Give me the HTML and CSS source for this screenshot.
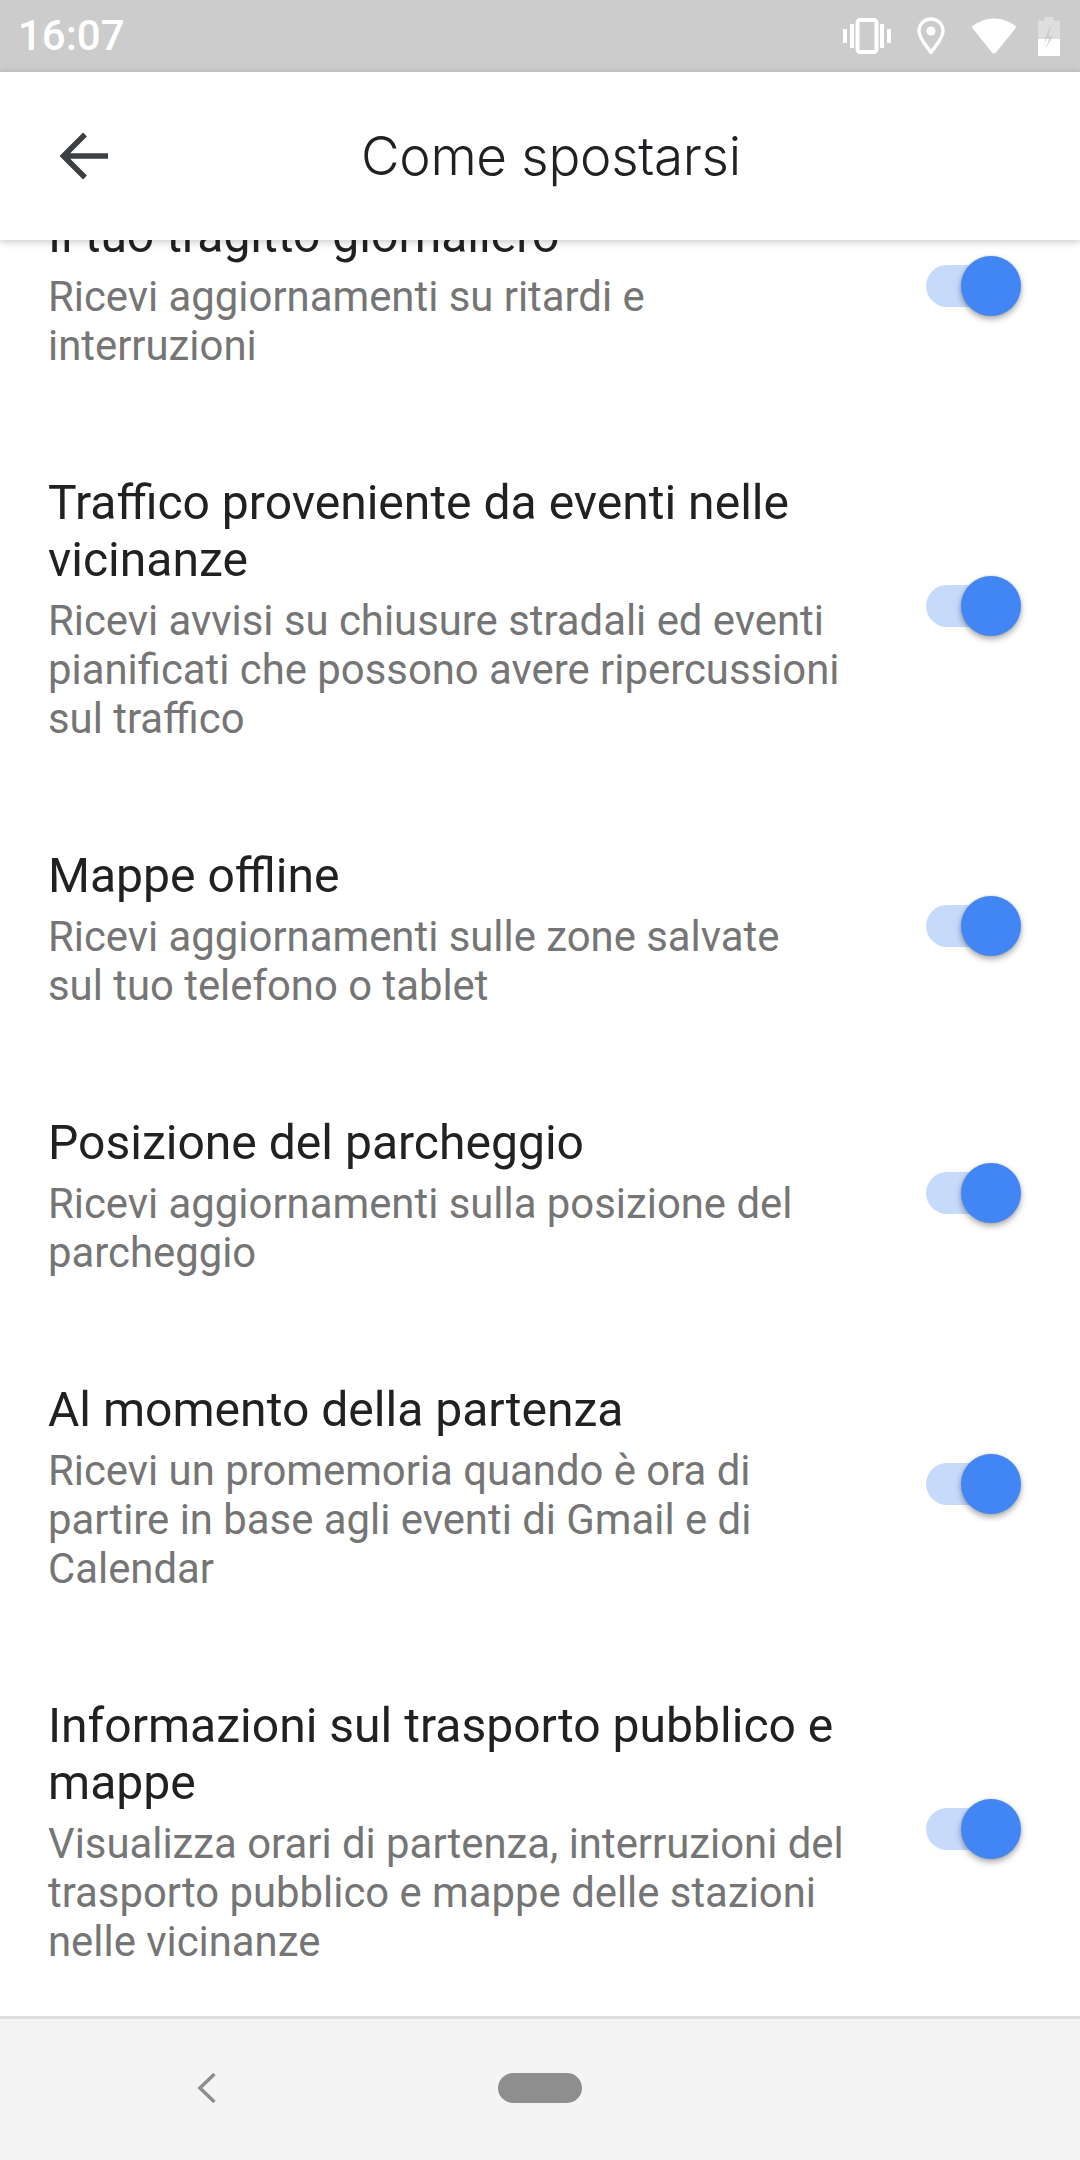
FILE: index.html
```html
<!DOCTYPE html>
<html lang="it">
<head>
<meta charset="utf-8">
<title>Come spostarsi</title>
<link rel="stylesheet" href="styles.css">
</head>
<body>
<div class="app">
  <div class="statusbar">
    <span class="time">16:07</span>
    <div class="status-icons">
      <svg class="ic-vibrate" width="48" height="36" viewBox="0 0 48 36"><rect x="0" y="11" width="4" height="14" fill="#fff"/><rect x="7" y="6" width="4" height="24" fill="#fff"/><rect x="14.500" y="2" width="19" height="32" rx="2.500" fill="none" stroke="#fff" stroke-width="4"/><rect x="37" y="6" width="4" height="24" fill="#fff"/><rect x="44" y="11" width="4" height="14" fill="#fff"/></svg>
      <svg class="ic-pin" width="28" height="38" viewBox="0 0 28 38"><path d="M14 35.500C9 28 2 21.500 2 14 2 7 7.500 2 14 2s12 5 12 12c0 7.500-7 14-12 21.500z" fill="none" stroke="#fff" stroke-width="3.400" stroke-linejoin="round"/><circle cx="14" cy="14" r="4.500" fill="#fff"/></svg>
      <svg class="ic-wifi" width="46" height="36" viewBox="0 0 46 36"><path d="M0.500 9C7 3.500 14.500 0.500 23 0.500S39 3.500 45.500 9L25 34.500c-1 1.300-3 1.300-4 0z" fill="#fff"/></svg>
      <svg class="ic-battery" width="22" height="39" viewBox="0 0 22 39"><path d="M6.500 0h9v3.500H22V39H0V3.500h6.500z" fill="#fff" fill-opacity=".35"/><path d="M0 22h6.800L6 30l2-8h14v17H0z" fill="#fff"/><path d="M12 9l-5 13h4.500L6.500 33 15 19h-4.500L13 9z" fill="#ccc"/></svg>
    </div>
  </div>

  <header class="appbar">
    <svg class="ic-back" width="48" height="48" viewBox="0 0 48 48"><path d="M48 24H4M25 2.500 3.500 24 25 45.500" fill="none" stroke="#3c4043" stroke-width="5.500"/></svg>
    <h1 class="appbar-title">Come spostarsi</h1>
  </header>

  <main class="content">
    <div class="list">
      <div class="row">
        <div class="row-text">
          <div class="row-title">Il tuo tragitto giornaliero</div>
          <div class="row-sub">Ricevi aggiornamenti su ritardi e<br>interruzioni</div>
        </div>
        <div class="switch"><span class="track"></span><span class="knob"></span></div>
      </div>
      <div class="row">
        <div class="row-text">
          <div class="row-title">Traffico proveniente da eventi nelle<br>vicinanze</div>
          <div class="row-sub">Ricevi avvisi su chiusure stradali ed eventi<br>pianificati che possono avere ripercussioni<br>sul traffico</div>
        </div>
        <div class="switch"><span class="track"></span><span class="knob"></span></div>
      </div>
      <div class="row">
        <div class="row-text">
          <div class="row-title">Mappe offline</div>
          <div class="row-sub">Ricevi aggiornamenti sulle zone salvate<br>sul tuo telefono o tablet</div>
        </div>
        <div class="switch"><span class="track"></span><span class="knob"></span></div>
      </div>
      <div class="row">
        <div class="row-text">
          <div class="row-title">Posizione del parcheggio</div>
          <div class="row-sub">Ricevi aggiornamenti sulla posizione del<br>parcheggio</div>
        </div>
        <div class="switch"><span class="track"></span><span class="knob"></span></div>
      </div>
      <div class="row">
        <div class="row-text">
          <div class="row-title">Al momento della partenza</div>
          <div class="row-sub">Ricevi un promemoria quando è ora di<br>partire in base agli eventi di Gmail e di<br>Calendar</div>
        </div>
        <div class="switch"><span class="track"></span><span class="knob"></span></div>
      </div>
      <div class="row">
        <div class="row-text">
          <div class="row-title">Informazioni sul trasporto pubblico e<br>mappe</div>
          <div class="row-sub">Visualizza orari di partenza, interruzioni del<br>trasporto pubblico e mappe delle stazioni<br>nelle vicinanze</div>
        </div>
        <div class="switch"><span class="track"></span><span class="knob"></span></div>
      </div>
    </div>
  </main>

  <nav class="navbar">
    <svg class="ic-navback" width="20" height="30" viewBox="0 0 20 30"><path d="M17.500 1 3 15l14.500 14" fill="none" stroke="#8e8e8e" stroke-width="3.500"/></svg>
    <span class="pill"></span>
  </nav>
</div>
</body>
</html>
```

FILE: styles.css
```css
* { box-sizing: border-box; }
html, body { margin: 0; padding: 0; background: #fff; }
body { font-family: Roboto, "Noto Sans", Arial, sans-serif; }

.app {
  width: 1080px;
  height: 2160px;
  display: flex;
  flex-direction: column;
  overflow: hidden;
}

.statusbar {
  flex: 0 0 72px;
  background: #cccccc;
  display: flex;
  align-items: center;
  justify-content: space-between;
  padding: 0 20px 0 18px;
  color: #fff;
}
.time { font-size: 42px; line-height: 72px; font-weight: 500; }
.status-icons { display: flex; align-items: center; gap: 26px; }
.ic-wifi { margin-right: -5px; }

.appbar {
  flex: 0 0 168px;
  background: #fff;
  display: flex;
  align-items: center;
  padding-left: 60px;
  position: relative;
  z-index: 2;
  box-shadow: 0 2px 8px rgba(0, 0, 0, 0.22);
}
.appbar-title {
  margin: 0 0 0 253px;
  font-family: Inter, Roboto, sans-serif;
  font-size: 53px;
  font-weight: 350;
  letter-spacing: -0.3px;
  color: #202124;
  white-space: nowrap;
}

.content { flex: 1 1 auto; overflow: hidden; background: #fff; min-height: 0; }
.list { margin-top: -85px; }

.row {
  display: flex;
  align-items: center;
  justify-content: space-between;
  padding: 52px 59px 52px 48px;
}
.row-title {
  font-size: 48.05px;
  line-height: 57px;
  color: #212121;
  margin-bottom: 8px;
}
.row-sub {
  font-size: 41.85px;
  line-height: 49px;
  color: #757575;
}

.switch {
  position: relative;
  flex: 0 0 95px;
  width: 95px;
  height: 60px;
  margin-bottom: 6px;
}
.track {
  display: block;
  position: absolute;
  left: 0;
  top: 9px;
  width: 84px;
  height: 42px;
  border-radius: 21px;
  background: #c6dafc;
}
.knob {
  display: block;
  position: absolute;
  right: 0;
  top: 0;
  width: 60px;
  height: 60px;
  border-radius: 50%;
  background: #4285f4;
  box-shadow: 0 3px 6px rgba(0, 0, 0, 0.35), 0 0 2px rgba(0, 0, 0, 0.12);
}

.navbar {
  flex: 0 0 144px;
  background: #f4f4f4;
  border-top: 3px solid #dedede;
  display: flex;
  align-items: center;
  padding: 0 0 3px 197px;
}
.ic-navback { display: block; }
.pill {
  width: 84px;
  height: 30px;
  border-radius: 15px;
  background: #8e8e8e;
  margin-left: 281px;
}
```
